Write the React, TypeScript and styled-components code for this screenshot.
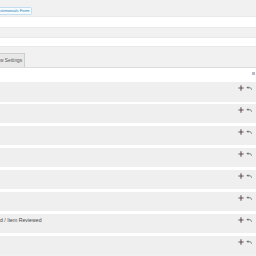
import React from "react";
import styled, { createGlobalStyle } from "styled-components";

const Global = createGlobalStyle`
  html, body { margin: 0; padding: 0; }
  body {
    width: 256px; height: 256px; overflow: hidden;
    background: #f1f1f1;
    font-family: "Liberation Sans", Arial, sans-serif;
  }
`;

const Page = styled.div`
  display: flex;
  flex-direction: column;
  width: 256px;
`;

const TopBar = styled.div`
  height: 16px;
  background: #f1f1f1;
  display: flex;
  align-items: flex-start;
  padding-top: 7px;
  box-sizing: border-box;
`;

const FormButton = styled.span`
  display: inline-flex;
  align-items: center;
  height: 6px;
  padding: 0 1px 0 0;
  border: 1px solid #c3def0;
  border-left: none;
  border-radius: 0 2px 2px 0;
  background: #f6fbfe;
  color: #2b7fb8;
  font-size: 4.2px;
  line-height: 6px;
  white-space: nowrap;
`;

const InputBand = styled.div<{ $h: number }>`
  height: ${(p) => p.$h}px;
  background: #ffffff;
  border-top: 1px solid #e9e9e9;
  border-bottom: 1px solid #e9e9e9;
  box-sizing: border-box;
`;

const GreyGap = styled.div<{ $h: number }>`
  height: ${(p) => p.$h}px;
  background: #f1f1f1;
`;

const TabsArea = styled.div`
  height: 21px;
  background: #f1f1f1;
  display: flex;
  align-items: flex-end;
  border-bottom: 1px solid #dcdcdc;
  box-sizing: border-box;
`;

const Tab = styled.span`
  height: 14px;
  display: inline-flex;
  align-items: center;
  padding: 0 2px 0 0;
  background: #e8e8e8;
  border: 1px solid #cfcfcf;
  border-left: none;
  border-bottom: none;
  color: #555;
  font-size: 4.8px;
  white-space: nowrap;
  box-sizing: border-box;
`;

const Panel = styled.div`
  background: #ffffff;
  display: flex;
  flex-direction: column;
  gap: 2.35px;
`;

const PanelHead = styled.div`
  height: 11.6px;
  display: flex;
  justify-content: flex-end;
  align-items: flex-start;
  padding: 4px 1px 0 0;
  box-sizing: border-box;
`;

const TinyIcon = styled.span`
  width: 3px;
  height: 3px;
  background: #b8bcc4;
`;

const Row = styled.div`
  height: 19.6px;
  background: #efefef;
  display: flex;
  align-items: flex-start;
  justify-content: space-between;
  padding-top: 3.5px;
  box-sizing: border-box;
`;

const RowLabel = styled.span`
  color: #4a4a4a;
  font-size: 5.2px;
  line-height: 6px;
  padding-top: 0;
  white-space: nowrap;
`;

const Actions = styled.div`
  display: flex;
  align-items: center;
  gap: 2.5px;
  margin-right: 4px;
`;

const MoveIcon = () => (
  <svg width="6" height="6" viewBox="0 0 6 6">
    <path d="M3 0.3v5.4M0.3 3h5.4" stroke="#6a6468" strokeWidth="1.2" />
    <rect x="2.3" y="2.3" width="1.4" height="1.4" fill="#8a5a66" />
  </svg>
);

const UndoIcon = () => (
  <svg width="6" height="4" viewBox="0 0 6 4">
    <path d="M5.6 3.6 C5.4 2 4 1.6 2.2 1.6" stroke="#6c7078" strokeWidth="1" fill="none" />
    <path d="M0.4 1.6 L2.4 0.2 L2.4 3 Z" fill="#6c7078" />
  </svg>
);

const rows = ["", "", "", "", "", "", "d / Item Reviewed", ""];

export default function App() {
  return (
    <Page>
      <Global />
      <TopBar>
        <FormButton>stimonials Form</FormButton>
      </TopBar>
      <InputBand $h={12} />
      <GreyGap $h={9} />
      <InputBand $h={10} />
      <TabsArea>
        <Tab>w Settings</Tab>
      </TabsArea>
      <Panel>
        <PanelHead>
          <TinyIcon />
        </PanelHead>
        {rows.map((label, i) => (
          <Row key={i}>
            <RowLabel>{label}</RowLabel>
            <Actions>
              <MoveIcon />
              <UndoIcon />
            </Actions>
          </Row>
        ))}
      </Panel>
    </Page>
  );
}
